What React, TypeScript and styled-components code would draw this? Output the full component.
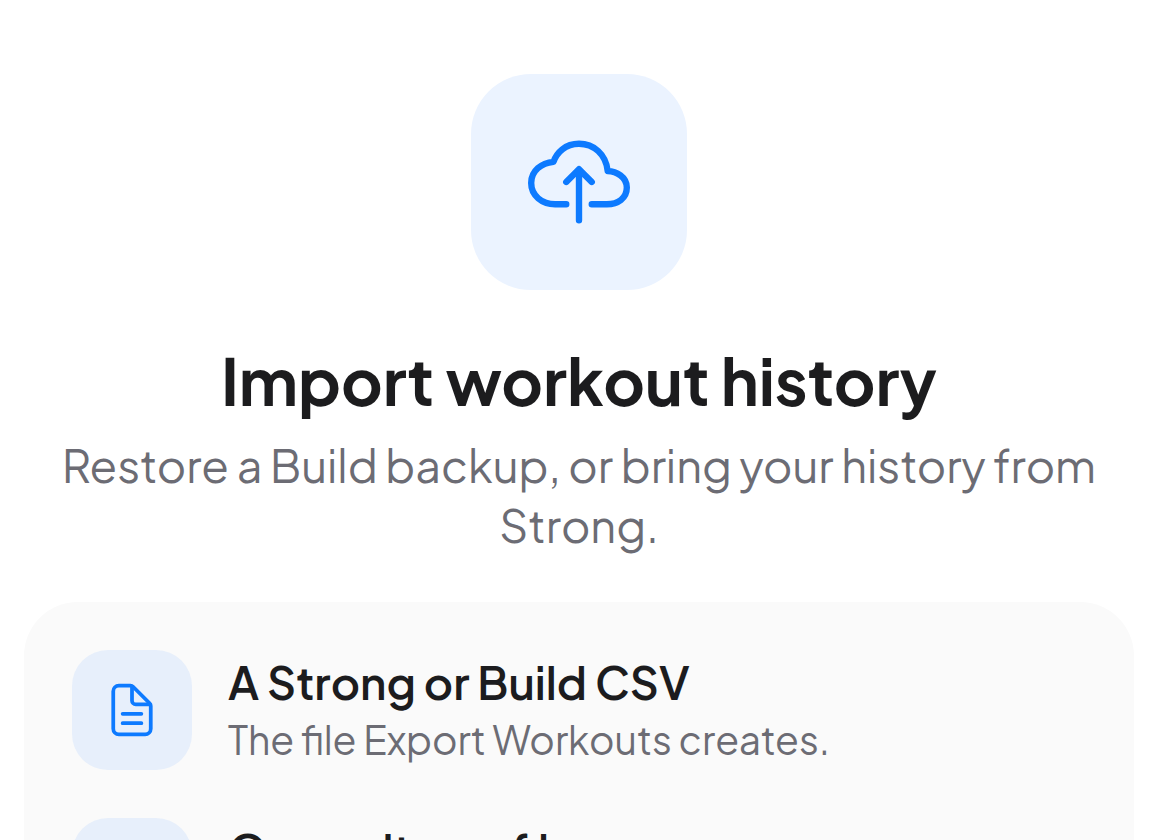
import React from "react";
import styled, { createGlobalStyle } from "styled-components";
import {
  IoCloudUploadOutline,
  IoDocumentTextOutline,
  IoScaleOutline,
} from "react-icons/io5";

const GlobalStyle = createGlobalStyle`
  * { box-sizing: border-box; }
  body {
    margin: 0;
    background: #ffffff;
    color: #1c1c1e;
    font-family: "Plus Jakarta Sans", Inter, "Open Sans", sans-serif;
  }
  html { scrollbar-width: none; }
`;

const Page = styled.main`
  display: flex;
  flex-direction: column;
  padding: 74px 24px 48px;
`;

const Hero = styled.header`
  display: flex;
  flex-direction: column;
  align-items: center;
  text-align: center;
`;

const IconTile = styled.span<{ $size: number; $radius: number; $color: string }>`
  flex: none;
  display: flex;
  align-items: center;
  justify-content: center;
  width: ${(p) => p.$size}px;
  height: ${(p) => p.$size}px;
  border-radius: ${(p) => p.$radius}px;
  background: ${(p) => p.$color};
  color: #0d7aff;
`;

const Title = styled.h1`
  margin: 48px 0 0;
  font-size: 64px;
  font-weight: 700;
  line-height: 84px;
`;

const Lead = styled.p`
  margin: 13px 0 0;
  padding: 0 24px;
  font-size: 45px;
  line-height: 60px;
  color: #6c6c74;
`;

const Card = styled.ul`
  display: flex;
  flex-direction: column;
  gap: 48px;
  margin: 47px 0 0;
  padding: 48px;
  list-style: none;
  border-radius: 54px;
  background: #fafafa;
`;

const Row = styled.li`
  display: flex;
  align-items: center;
  gap: 36px;
`;

const RowTitle = styled.h2`
  margin: 0;
  font-size: 45px;
  font-weight: 600;
  line-height: 60px;
`;

const RowText = styled.p`
  margin: 0;
  font-size: 39px;
  line-height: 56px;
  color: #6c6c74;
`;

const rows = [
  {
    Icon: IoDocumentTextOutline,
    title: "A Strong or Build CSV",
    text: "The file Export Workouts creates.",
  },
  {
    Icon: IoScaleOutline,
    title: "Opens it as a file",
    text: "Your workouts stay as they are.",
  },
];

export default function App() {
  return (
    <>
      <GlobalStyle />
      <Page>
        <Hero>
          <IconTile $size={216} $radius={60} $color="#ebf3ff">
            <IoCloudUploadOutline size={102} aria-hidden />
          </IconTile>
          <Title>Import workout history</Title>
          <Lead>Restore a Build backup, or bring your history from Strong.</Lead>
        </Hero>
        <Card>
          {rows.map(({ Icon, title, text }) => (
            <Row key={title}>
              <IconTile $size={120} $radius={36} $color="#e7effb">
                <Icon size={60} aria-hidden />
              </IconTile>
              <div>
                <RowTitle>{title}</RowTitle>
                <RowText>{text}</RowText>
              </div>
            </Row>
          ))}
        </Card>
      </Page>
    </>
  );
}
